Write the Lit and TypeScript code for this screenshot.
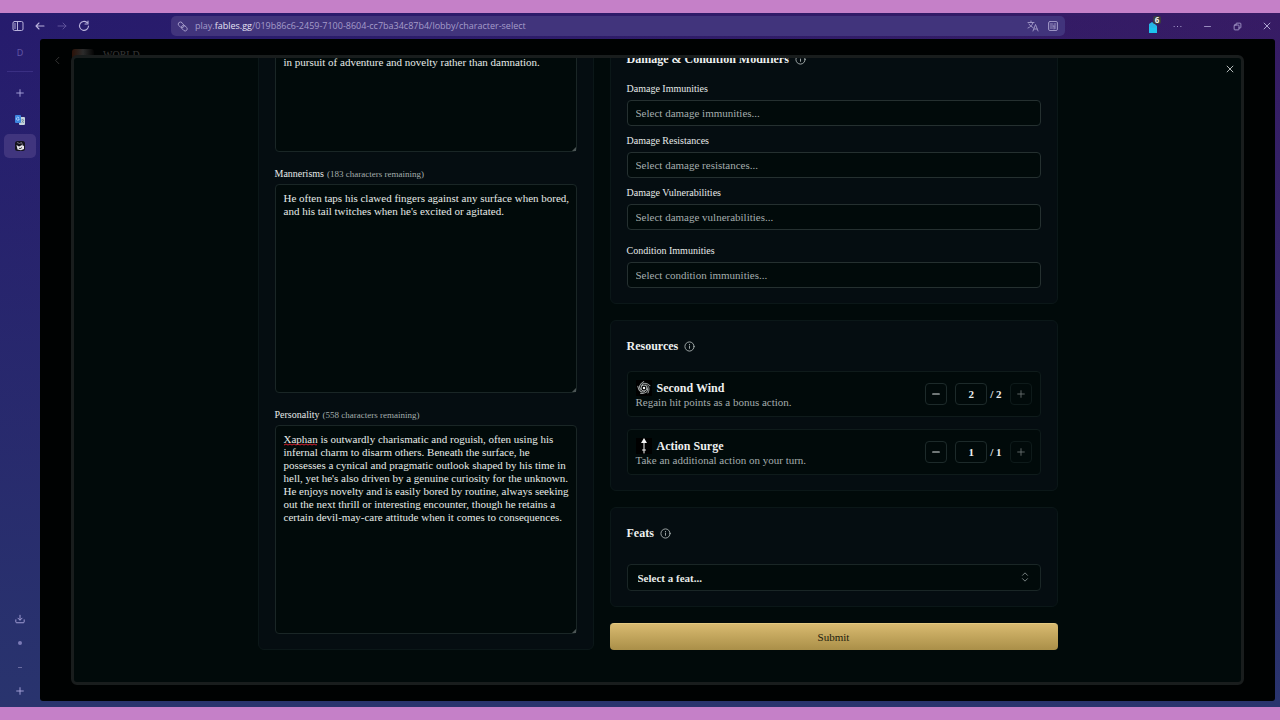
import { LitElement, html, css, svg, nothing } from "lit";
import { customElement, property } from "lit/decorators.js";

const icon = (body: unknown, size = 12, width = 1.5, view = 24) => html`<svg
  width=${size} height=${size} viewBox="0 0 ${view} ${view}" fill="none" stroke="currentColor"
  stroke-width=${width} stroke-linecap="round" stroke-linejoin="round" aria-hidden="true">${body}</svg>`;

const closeShape = svg`<path d="M5 5 19 19M19 5 5 19"/>`;
const plusShape = svg`<path d="M12 4v16M4 12h16"/>`;
const minusShape = svg`<path d="M4 12h16"/>`;
const infoShape = svg`<circle cx="12" cy="12" r="10"/><path d="M12 11v5M12 7.5v.5"/>`;

const controls = css`
  *, *::before, *::after { box-sizing: border-box; }
  svg { display: block; flex: none; }
  button, input, textarea, select {
    margin: 0; padding: 0; border: 0; background: none; color: inherit;
    font: inherit; outline: none; border-radius: 0;
  }
  button { display: flex; align-items: center; justify-content: center; }
`;

@customElement("browser-bar")
class BrowserBar extends LitElement {
  static styles = [controls, css`
    :host {
      display: grid; grid-template-columns: 171px minmax(0, 894px) 1fr; align-items: center;
      height: 26px; color: #b9b2dc; font: 9px/14px "Open Sans", "Noto Sans", sans-serif;
    }
    .nav { display: flex; gap: 10px; padding-left: 12px; }
    .nav button { width: 12px; height: 12px; }
    .nav .off { color: #5f529a; }
    .address {
      display: flex; align-items: center; gap: 7px; height: 20px; padding: 0 6px;
      border-radius: 5px; background: #41347c; color: #a59cca;
    }
    .url { flex: 1; text-align: left; white-space: nowrap; overflow: hidden; }
    .domain { color: #e6e2f4; }
    .address .tool { margin-left: 1px; }
    .window { display: flex; align-items: center; justify-content: flex-end; padding-right: 7px; }
    .window button { width: 12px; height: 20px; margin-left: 18px; }
    .window .ext { position: relative; width: 14px; margin-left: 0; }
    .badge {
      position: absolute; top: 0; right: 0; width: 8px; height: 8px; border-radius: 2px;
      background: #3b3b40; color: #f2f2ec; font: bold 8px/8px "Noto Sans", sans-serif;
    }
    .window .more { margin-left: 10px; }
  `];
  render() {
    return html`
      <nav class="nav" aria-label="Navigation">
        <button aria-label="Sidebar">${icon(svg`<rect x="2" y="3" width="20" height="18" rx="3"/><path d="M11 3v18M5 8h2M5 12h2M5 16h2"/>`, 12, 2)}</button>
        <button aria-label="Back">${icon(svg`<path d="M20 12H4M10 6l-6 6 6 6"/>`, 12, 2.2)}</button>
        <button class="off" aria-label="Forward">${icon(svg`<path d="M4 12h16M14 6l6 6-6 6"/>`, 12, 2)}</button>
        <button aria-label="Reload">${icon(svg`<path d="M21 12a9 9 0 1 1-3-7M20 2v6h-6"/>`, 12, 2.2)}</button>
      </nav>
      <button class="address" aria-label="Address">
        ${icon(svg`<rect x="2" y="4" width="14" height="9" rx="4.5" transform="rotate(45 9 8.5)"/><rect x="9" y="11" width="14" height="9" rx="4.5" transform="rotate(45 16 15.5)"/>`, 11, 2)}
        <span class="url">play.<span class="domain">fables.gg</span>/019b86c6-2459-7100-8604-cc7ba34c87b4/lobby/character-select</span>
        <span class="tool">${icon(svg`<path d="M2 5h12M8 2v3M12 5c-1 5-5 9-10 11M4 8c2 3 5 6 8 7M12 22l5-13 5 13M14 18h6"/>`, 12, 1.8)}</span>
        <span class="tool">${icon(svg`<rect x="3" y="3" width="18" height="18" rx="3"/><path d="M6 8h5M6 12h12M6 16h5M14 8h4M15 16h3M14 12v6"/>`, 12, 1.8)}</span>
      </button>
      <div class="window">
        <button class="ext" aria-label="Extension, 6">
          <svg width="12" height="14" viewBox="0 0 12 14"><path d="M1 5l3-2 4 3 1 1v7H1z" fill="#27b5e6"/><path d="M1 8l4 1 4-1v6H1z" fill="#1cc4ef"/></svg>
          <span class="badge">6</span>
        </button>
        <button class="more" aria-label="More">${icon(svg`<path d="M3 12h.1M12 12h.1M21 12h.1"/>`, 9, 3)}</button>
        <button aria-label="Minimize">${icon(svg`<path d="M4 12h16"/>`, 9, 2)}</button>
        <button aria-label="Restore">${icon(svg`<rect x="3" y="8" width="13" height="13" rx="2"/><path d="M8 8V5q0-2 2-2h9q2 0 2 2v9q0 2-2 2h-3"/>`, 9, 2)}</button>
        <button aria-label="Close window">${icon(closeShape, 10, 2.2)}</button>
      </div>`;
  }
}

@customElement("tab-rail")
class TabRail extends LitElement {
  static styles = [controls, css`
    :host {
      display: flex; flex-direction: column; align-items: center; width: 40px; padding: 8px 4px 4px;
      color: #aaa5dc; font: 9px/12px "Noto Sans", sans-serif;
    }
    .space { height: 12px; color: #6155a5; }
    .rule { width: 26px; height: 1px; margin: 12px 0 8px; background: #3a2f83; }
    .tab { width: 32px; height: 26px; margin-bottom: 1px; border-radius: 5px; }
    .tab.current { height: 24px; background: #40357e; }
    .fill { flex: 1; }
    .small { height: 24px; }
    .dot { width: 4px; height: 4px; border-radius: 2px; background: #7b7bb6; }
    .dash { width: 4px; height: 1px; background: #6a6ca0; }
  `];
  render() {
    return html`
      <button class="space" aria-label="Workspace D">D</button>
      <div class="rule"></div>
      <button class="tab" aria-label="New tab">${icon(plusShape, 10, 2.2)}</button>
      <button class="tab" aria-label="Translate">
        <svg width="12" height="12" viewBox="0 0 12 12"><rect x="5" y="3" width="6" height="8" rx="1" fill="#c6d3dc"/><path d="M7 6h3M8.500 5v1M10 6 7.500 9M8 7l2 2" stroke="#6f8796" stroke-width=".7"/><rect x="1" y="1" width="6" height="8" rx="1" fill="#3d86e0"/><path d="M5 3.800A1.500 1.500 0 1 0 5.300 5H4" fill="none" stroke="#cfe3ff" stroke-width=".7"/></svg>
      </button>
      <button class="tab current" aria-label="Fables">
        <svg width="12" height="12" viewBox="0 0 12 12"><rect x="1" y="1" width="10" height="10" rx="2.500" fill="#15131f"/><path d="M2.500 5l2.500 1.500 3-1.500 2 1v3l-3 1.200-3.500-.7z" fill="#e6e4ea"/><path d="M3 2.500l2.500 1 2-1 1 2.500" stroke="#8a8793" stroke-width=".8" fill="none"/><path d="M5 8l1 .8 2-1.300" stroke="#222" stroke-width=".8" fill="none"/></svg>
      </button>
      <div class="fill"></div>
      <button class="small" aria-label="Downloads">${icon(svg`<path d="M12 3v11M7 10l5 5 5-5M2 14v5q0 2 2 2h16q2 0 2-2v-5"/>`, 10, 2.2)}</button>
      <button class="small" aria-label="Space one"><span class="dot"></span></button>
      <button class="small" aria-label="Space two"><span class="dash"></span></button>
      <button class="small" aria-label="New space">${icon(plusShape, 10, 2.2)}</button>`;
  }
}

const swirl = svg`<g transform="translate(8 8)">${[0, 72, 144, 216, 288].map(
  (a) => svg`<path transform="rotate(${a})" d="M1.500-3C5-3 6 1 4 5"/>`
)}<circle r="3"/><circle r="1.200" fill="#fff" stroke="none"/></g>`;
const surge = svg`<path d="M8 4v11M6.500 12h3" /><path d="M8 0l3 5H5z" fill="currentColor" stroke="none"/>`;

@customElement("resource-row")
class ResourceRow extends LitElement {
  @property() name = "";
  @property() text = "";
  @property({ type: Number }) value = 0;
  @property() glyph = "";
  static styles = [controls, css`
    :host {
      display: flex; align-items: center; gap: 8px; height: 46px; padding: 0 8px;
      border: 1px solid #0f1b1b; border-radius: 4px; background: #010a0a;
    }
    .about { flex: 1; }
    .title { display: flex; align-items: center; gap: 5px; color: #eef0ef; font-size: 12px; line-height: 16px; font-weight: bold; }
    .pic { background: #000; color: #a4a8a8; }
    .pic.surge { color: #f4f4f4; }
    .note { color: #a4adad; font-size: 11px; line-height: 13px; }
    button { width: 22px; height: 22px; border: 1px solid #1d2a2a; border-radius: 4px; color: #dfe3e3; }
    button:disabled { border-color: #0e1a1a; color: #6f7777; }
    .count { display: flex; align-items: center; gap: 3px; font-weight: bold; font-size: 11px; color: #eef0ef; }
    .count input { width: 32px; height: 22px; border: 1px solid #1d2a2a; border-radius: 4px; text-align: center; }
  `];
  render() {
    return html`
      <div class="about">
        <div class="title"><span class="pic ${this.glyph}">${icon(this.glyph === "swirl" ? swirl : surge, 16, 1, 16)}</span>${this.name}</div>
        <div class="note">${this.text}</div>
      </div>
      <button aria-label="Decrease ${this.name}">${icon(minusShape, 10, 2.5)}</button>
      <label class="count"><input inputmode="numeric" aria-label=${this.name} .value=${String(this.value)} />/ ${this.value}</label>
      <button disabled aria-label="Increase ${this.name}">${icon(plusShape, 10, 2)}</button>`;
  }
}

const mannerisms = `He often taps his clawed fingers against any surface when bored,
and his tail twitches when he's excited or agitated.`;
const personality = `Xaphan is outwardly charismatic and roguish, often using his
infernal charm to disarm others. Beneath the surface, he
possesses a cynical and pragmatic outlook shaped by his time in
hell, yet he's also driven by a genuine curiosity for the unknown.
He enjoys novelty and is easily bored by routine, always seeking
out the next thrill or interesting encounter, though he retains a
certain devil-may-care attitude when it comes to consequences.`;

@customElement("character-form")
class CharacterForm extends LitElement {
  static styles = [controls, css`
    :host {
      display: flex; flex-direction: column; justify-content: flex-end; align-items: center;
      height: 100%; padding: 0 32px 32px; overflow: hidden;
    }
    form { display: grid; grid-template-columns: 3fr 4fr; gap: 16px; align-items: end; width: 100%; max-width: 800px; }
    .column { display: flex; flex-direction: column; gap: 16px; }
    .panel { padding: 15px 16px; border: 1px solid #0b1718; border-radius: 6px; background: #050d11; }
    label { display: block; margin-bottom: 4px; font-size: 10px; line-height: 15px; color: #e6eae9; }
    .counted { display: flex; align-items: baseline; gap: 3px; height: 15px; margin-bottom: 3px; }
    .left { font-size: 9px; color: #a4adad; }
    .box { position: relative; margin-bottom: 14px; }
    .box:last-child { margin-bottom: 0; }
    textarea {
      display: block; width: 100%; height: 209px; padding: 7px 8px; border: 1px solid #1a2626;
      border-radius: 4px; background: #010a0a; color: #e6eae8; font-size: 11px; line-height: 13px;
      white-space: pre; overflow: hidden; resize: none;
    }
    .short { height: 104px; }
    .grip { position: absolute; right: 1px; bottom: 1px; color: #4c5555; }
    .spelling { position: absolute; left: 9px; top: 18px; color: #d3202f; }
    h2 { display: flex; align-items: center; gap: 6px; margin: 0 0 15px; font-size: 12px; line-height: 20px; color: #eef1f0; }
    h2 svg { color: #a8b0b0; }
    .fields { display: grid; gap: 7px; }
    .apart { margin-top: 6px; }
    .field input { display: block; width: 100%; height: 26px; padding: 0 8px; border: 1px solid #253030; border-radius: 4px; background: #010a0a; font-size: 11px; }
    .field input::placeholder { color: #a4adad; opacity: 1; }
    .rows { display: grid; gap: 12px; }
    .modifiers h2 { margin-bottom: 12px; }
    .feats h2 { margin-bottom: 21px; }
    .pick { position: relative; color: #8d9797; }
    select { display: block; width: 100%; height: 27px; padding: 0 10px; appearance: none; border: 1px solid #1a2626; border-radius: 4px; background: #010a0a; color: #e6eae8; font-size: 11px; font-weight: bold; }
    .pick svg { position: absolute; right: 11px; top: 8px; }
    .submit { height: 27px; border-radius: 4px; background: linear-gradient(#d8ba70, #aa8f48); border-top: 1px solid #e3c981; color: #221b0c; font-size: 11px; }
  `];
  private area(id: string, name: string, left: string, value: string, misspelt = false) {
    return html`
      <label class="counted" for=${id}>${name} <span class="left">(${left} characters remaining)</span></label>
      <div class="box">
        <textarea id=${id} spellcheck="false" .value=${value}></textarea>
        ${misspelt ? html`<svg class="spelling" width="35" height="3" viewBox="0 0 35 3" fill="none" stroke="currentColor" aria-hidden="true"><path d="M0 2l2-1 2 1 2-1 2 1 2-1 2 1 2-1 2 1 2-1 2 1 2-1 2 1 2-1 2 1 2-1 2 1 1-.5"/></svg>` : nothing}
        ${this.grip()}
      </div>`;
  }
  private grip() {
    return html`<svg class="grip" width="4" height="4" viewBox="0 0 4 4" fill="currentColor" aria-hidden="true"><path d="M4 0v4H0z"/></svg>`;
  }
  private field(id: string, name: string, hint: string, apart = false) {
    return html`<div class="field ${apart ? "apart" : ""}"><label for=${id}>${name}</label><input id=${id} placeholder=${hint} /></div>`;
  }
  render() {
    return html`
      <form>
        <div class="column">
          <section class="panel">
            <div class="box"><textarea class="short" aria-label="Background" spellcheck="false" .value=${"in pursuit of adventure and novelty rather than damnation."}></textarea>${this.grip()}</div>
            ${this.area("mannerisms", "Mannerisms", "183", mannerisms)}
            ${this.area("personality", "Personality", "558", personality, true)}
          </section>
        </div>
        <div class="column">
          <section class="panel modifiers">
            <h2>Damage &amp; Condition Modifiers ${icon(infoShape, 11, 2)}</h2>
            <div class="fields">
              ${this.field("immune", "Damage Immunities", "Select damage immunities...")}
              ${this.field("resist", "Damage Resistances", "Select damage resistances...")}
              ${this.field("weak", "Damage Vulnerabilities", "Select damage vulnerabilities...")}
              ${this.field("condition", "Condition Immunities", "Select condition immunities...", true)}
            </div>
          </section>
          <section class="panel">
            <h2>Resources ${icon(infoShape, 11, 2)}</h2>
            <div class="rows">
              <resource-row name="Second Wind" text="Regain hit points as a bonus action." value="2" glyph="swirl"></resource-row>
              <resource-row name="Action Surge" text="Take an additional action on your turn." value="1" glyph="surge"></resource-row>
            </div>
          </section>
          <section class="panel feats">
            <h2>Feats ${icon(infoShape, 11, 2)}</h2>
            <div class="pick">
              <select aria-label="Feat"><option>Select a feat...</option></select>
              ${icon(svg`<path d="M6 8l6-6 6 6M6 16l6 6 6-6"/>`, 10, 2)}
            </div>
          </section>
          <button class="submit" type="button">Submit</button>
        </div>
      </form>`;
  }
}

@customElement("app-root")
class AppRoot extends LitElement {
  static styles = [controls, css`
    :host {
      box-sizing: border-box; display: grid; grid-template-rows: minmax(0, 1fr);
      height: 100vh; padding: 13px 0; overflow: hidden;
      background: #c580c8; font-family: "Liberation Serif", serif;
    }
    .window {
      display: grid; grid-template: auto minmax(0, 1fr) / auto 1fr; min-height: 0;
      background:
        linear-gradient(to bottom, transparent, #29346e),
        linear-gradient(to right, #261b6d, #371b64);
    }
    browser-bar { grid-column: 1 / -1; }
    .page { position: relative; margin: 0 5px 6px 0; border-radius: 3px; background: #000202; overflow: hidden; }
    .behind { display: flex; align-items: center; gap: 9px; padding: 4px 12px; color: #383838; font-size: 10px; line-height: 20px; }
    .behind svg { margin-top: 12px; }
    .thumb { width: 22px; height: 12px; border-radius: 3px; background: linear-gradient(to right, #2c1208, #2b2b2b, #050505); }
    .dialog { position: absolute; inset: 16px 31px; border: 3px solid #191d1d; border-radius: 6px; background: #010a0a; overflow: hidden; }
    .close { position: absolute; top: 3px; right: 3px; width: 16px; height: 16px; color: #c4c9c9; }
  `];
  render() {
    return html`
      <div class="window">
        <browser-bar></browser-bar>
        <tab-rail></tab-rail>
        <main class="page">
          <div class="behind">${icon(svg`<path d="M15 5l-7 7 7 7"/>`, 11, 2)}<span class="thumb"></span><span>WORLD</span></div>
          <div class="dialog" role="dialog" aria-label="Character">
            <character-form></character-form>
            <button class="close" aria-label="Close">${icon(closeShape, 10, 2.2)}</button>
          </div>
        </main>
      </div>`;
  }
}
